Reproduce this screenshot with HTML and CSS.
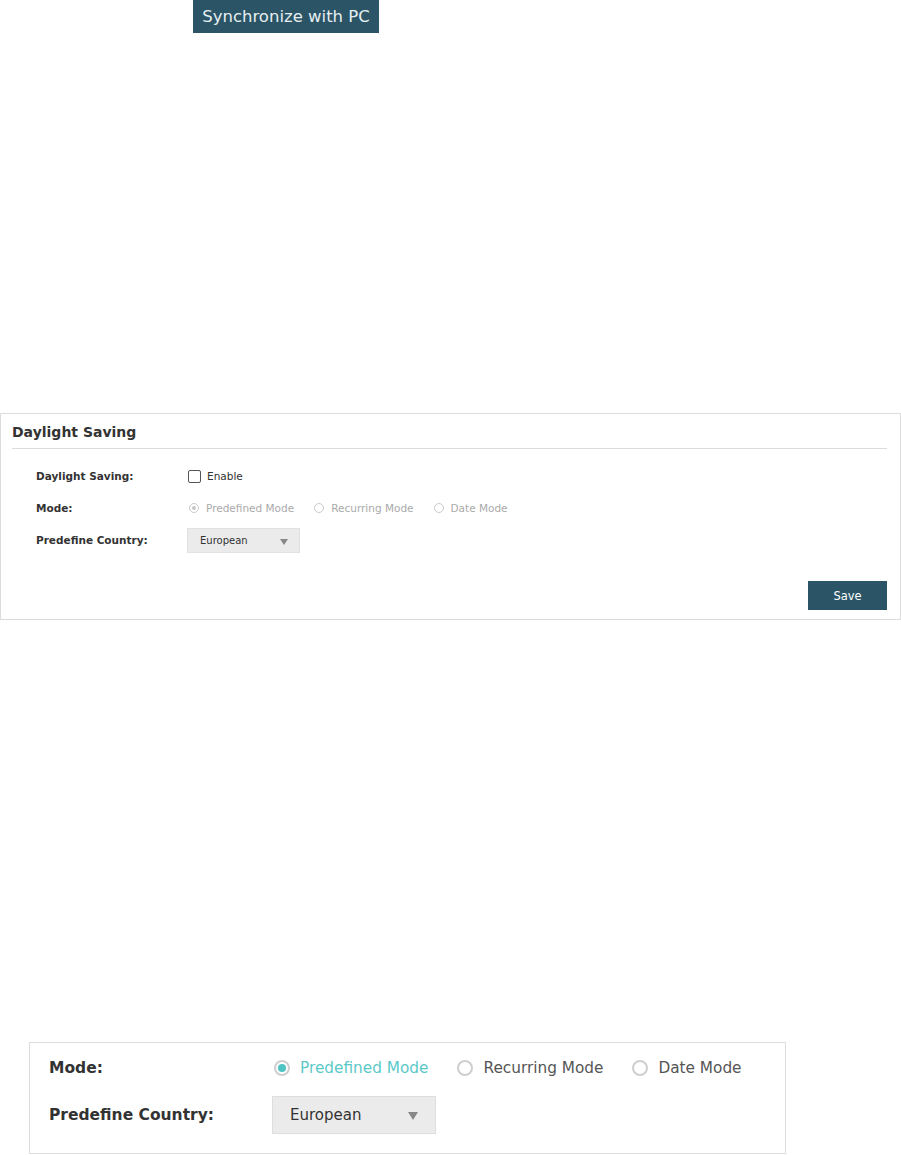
FILE: index.html
```html
<!DOCTYPE html>
<html lang="en">
<head>
    <meta charset="UTF-8">
    <title>Daylight Saving</title>
    <link rel="stylesheet" href="styles.css">
</head>
<body>

<div class="sync">
    <button class="btn-sync">Synchronize with PC</button>
</div>

<!-- Panel de horario de verano -->
<section class="panel">
    <h2 class="panel-title">Daylight Saving</h2>
    <div class="form">
        <div class="row">
            <span class="label">Daylight Saving:</span>
            <label class="check"><span class="box"></span>Enable</label>
        </div>
        <div class="row">
            <span class="label">Mode:</span>
            <div class="radios">
                <label class="radio disabled checked"><span class="dot"></span>Predefined Mode</label>
                <label class="radio disabled"><span class="dot"></span>Recurring Mode</label>
                <label class="radio disabled"><span class="dot"></span>Date Mode</label>
            </div>
        </div>
        <div class="row">
            <span class="label">Predefine Country:</span>
            <div class="select">European<span class="arrow"></span></div>
        </div>
    </div>
    <div class="panel-foot">
        <button class="btn-save">Save</button>
    </div>
</section>

<!-- Detalle ampliado -->
<section class="detail">
    <div class="row">
        <span class="label">Mode:</span>
        <div class="radios">
            <label class="radio active checked"><span class="dot"></span>Predefined Mode</label>
            <label class="radio"><span class="dot"></span>Recurring Mode</label>
            <label class="radio"><span class="dot"></span>Date Mode</label>
        </div>
    </div>
    <div class="row">
        <span class="label">Predefine Country:</span>
        <div class="select">European<span class="arrow"></span></div>
    </div>
</section>

</body>
</html>
```

FILE: styles.css
```css
body {
    margin: 0;
    padding: 0;
    background-color: white;
    font-family: "DejaVu Sans", Verdana, sans-serif;
    color: #333;
    width: 901px;
}

.sync {
    padding-left: 193px;
}

.btn-sync {
    display: block;
    width: 186px;
    height: 33px;
    padding: 0 0 1px 0;
    border: none;
    background-color: #2b5566;
    color: #e6eef0;
    font-family: "DejaVu Sans", Verdana, sans-serif;
    font-size: 16.5px;
    text-align: center;
}

/* Panel */
.panel {
    margin-top: 380px;
    border: 1px solid #dcdcdc;
    height: 207px;
    box-sizing: border-box;
    padding: 0 13px 0 11px;
    display: flex;
    flex-direction: column;
}

.panel-title {
    margin: 0;
    font-size: 14px;
    font-weight: bold;
    height: 34px;
    line-height: 37px;
    border-bottom: 1px solid #dcdcdc;
}

.form {
    padding: 11px 0 0 24px;
}

.form .row {
    display: grid;
    grid-template-columns: 151px 1fr;
    align-items: center;
    height: 32px;
    font-size: 10.5px;
}

.label {
    font-weight: bold;
}

.check {
    display: flex;
    align-items: center;
}

.check .box {
    width: 11px;
    height: 11px;
    border: 1px solid #555;
    border-radius: 2px;
    margin: 0 6px 0 1px;
}

.radios {
    display: flex;
    align-items: center;
}

.radio {
    display: flex;
    align-items: center;
}

.form .radio {
    margin-right: 18px;
    color: #aaa;
}

.form .radio .dot {
    width: 8px;
    height: 8px;
    border: 1px solid #ccc;
    border-radius: 50%;
    margin: 0 7px 0 2px;
    position: relative;
}

.form .radio.checked .dot::after {
    content: "";
    position: absolute;
    left: 2px;
    top: 2px;
    width: 4px;
    height: 4px;
    border-radius: 50%;
    background-color: #c8c8c8;
}

.form .select {
    width: 113px;
    height: 25px;
    box-sizing: border-box;
    background-color: #ebebeb;
    border: 1px solid #e2e2e2;
    padding-left: 12px;
    display: flex;
    align-items: center;
    position: relative;
    color: #333;
    font-size: 10px;
}

.arrow {
    position: absolute;
    border-left: 4px solid transparent;
    border-right: 4px solid transparent;
    border-top: 6px solid #888;
}

.form .arrow {
    right: 11px;
    top: 10px;
}

.panel-foot {
    margin-top: auto;
    padding-bottom: 9px;
    display: flex;
    justify-content: flex-end;
}

.btn-save {
    width: 79px;
    height: 29px;
    border: none;
    background-color: #2b5566;
    color: white;
    font-family: "DejaVu Sans", Verdana, sans-serif;
    font-size: 11.5px;
}

/* Detalle ampliado */
.detail {
    margin: 422px 0 0 29px;
    width: 757px;
    height: 112px;
    box-sizing: border-box;
    border: 1px solid #dcdcdc;
    padding: 9px 0 0 19px;
    font-size: 15.3px;
}

.detail .row {
    display: grid;
    grid-template-columns: 223px 1fr;
    align-items: center;
}

.detail .row:first-child {
    height: 32px;
}

.detail .row + .row {
    margin-top: 12px;
}

.detail .label {
    font-size: 15.5px;
}

.detail .radio {
    margin-right: 27px;
    color: #555;
}

.detail .radio.active {
    color: #5cc9c9;
}

.detail .radio .dot {
    width: 12px;
    height: 12px;
    border: 2px solid #cfcfcf;
    border-radius: 50%;
    margin: 0 10px 0 2px;
    position: relative;
}

.detail .radio.checked .dot::after {
    content: "";
    position: absolute;
    left: 2px;
    top: 2px;
    width: 8px;
    height: 8px;
    border-radius: 50%;
    background-color: #4ec4c4;
}

.detail .select {
    width: 164px;
    height: 38px;
    box-sizing: border-box;
    background-color: #ebebeb;
    border: 1px solid #dedede;
    padding-left: 17px;
    display: flex;
    align-items: center;
    position: relative;
    font-size: 15px;
}

.detail .arrow {
    right: 17px;
    top: 15px;
    border-left-width: 5px;
    border-right-width: 5px;
    border-top-width: 8px;
}
```
